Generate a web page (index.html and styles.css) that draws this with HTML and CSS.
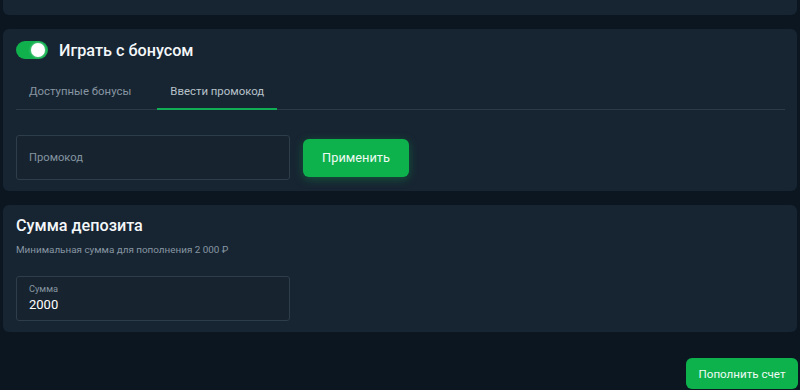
FILE: index.html
```html
<!DOCTYPE html>
<html lang="ru">
<head>
<meta charset="utf-8">
<link rel="stylesheet" href="styles.css">
</head>
<body>
<div class="page">
  <div class="card card-top"></div>

  <div class="card card-bonus">
    <div class="bonus-head">
      <span class="toggle"><span class="knob"></span></span>
      <span class="title">Играть с бонусом</span>
    </div>
    <div class="tabs">
      <div class="tab">Доступные бонусы</div>
      <div class="tab active">Ввести промокод</div>
    </div>
    <div class="promo-row">
      <div class="field promo"><span class="placeholder">Промокод</span></div>
      <button class="btn btn-apply">Применить</button>
    </div>
  </div>

  <div class="card card-sum">
    <div class="title">Сумма депозита</div>
    <div class="hint">Минимальная сумма для пополнения 2 000 ₽</div>
    <div class="field sum">
      <span class="label">Сумма</span>
      <span class="value">2000</span>
    </div>
  </div>

  <div class="actions">
    <button class="btn btn-pay">Пополнить счет</button>
  </div>
</div>
</body>
</html>
```

FILE: styles.css
```css
* { box-sizing: border-box; }
html, body {
  margin: 0;
  padding: 0;
  background: #0b1620;
  height: 100%;
  overflow: hidden;
}
body {
  font-family: Roboto, "Noto Sans", sans-serif;
  color: #ffffff;
}
.page {
  padding: 0 3px 0 3px;
  display: flex;
  flex-direction: column;
}
.card {
  background: #172532;
  border-radius: 6px;
}
.card-top {
  height: 15px;
  border-radius: 0 0 6px 6px;
}
.card-bonus {
  margin-top: 14px;
  height: 162px;
  padding: 12px 12px 0 13px;
}
.bonus-head {
  display: flex;
  align-items: center;
  height: 18px;
}
.toggle {
  width: 32px;
  height: 18px;
  border-radius: 9px;
  background: #10b04d;
  position: relative;
  flex: none;
}
.knob {
  position: absolute;
  right: 3px;
  top: 2px;
  width: 14px;
  height: 14px;
  border-radius: 50%;
  background: #ffffff;
  box-shadow: 0 0 3px rgba(255,255,255,0.6);
}
.title {
  font-size: 16.2px;
  font-weight: 500;
  line-height: 22px;
  color: #f4f7f9;
}
.bonus-head .title {
  margin-left: 11px;
  padding-top: 2px;
}
.tabs {
  display: flex;
  margin-top: 14px;
  border-bottom: 1px solid #2a3a47;
  height: 37px;
  gap: 13px;
}
.tab {
  padding: 0 13px;
  font-size: 11.4px;
  line-height: 36px;
  color: #8796a2;
}
.tab.active {
  color: #b8c2ca;
  border-bottom: 2px solid #10ad55;
  margin-bottom: -1px;
}
.promo-row {
  display: flex;
  align-items: center;
  margin-top: 25px;
  gap: 13px;
}
.field {
  width: 274px;
  height: 45px;
  border: 1px solid #2e3d4a;
  border-radius: 3px;
  background: #17242f;
}
.promo {
  display: flex;
  align-items: center;
  padding-left: 12px;
}
.placeholder {
  font-size: 11.2px;
  color: #8393a0;
}
.btn {
  border: none;
  font-family: inherit;
  color: #eefaf3;
  background: #0eb24d;
  border-radius: 6px;
}
.btn-apply {
  width: 106px;
  height: 38px;
  font-size: 12.8px;
  font-weight: 400;
  box-shadow: 0 2px 10px rgba(14,178,77,0.35);
}
.card-sum {
  margin-top: 14px;
  height: 127px;
  padding: 10px 13px 0 13px;
}
.hint {
  margin-top: 6px;
  font-size: 9.9px;
  line-height: 14px;
  color: #8796a2;
}
.sum {
  margin-top: 19px;
  padding: 5px 0 0 12px;
  display: flex;
  flex-direction: column;
}
.label {
  font-size: 9.2px;
  line-height: 14px;
  color: #8796a2;
}
.value {
  font-size: 13px;
  line-height: 18px;
  color: #ffffff;
}
.actions {
  display: flex;
  justify-content: flex-end;
  margin-top: 26px;
  margin-right: -1px;
}
.btn-pay {
  width: 112px;
  height: 31px;
  font-size: 11.6px;
  border-radius: 6px;
}
```
